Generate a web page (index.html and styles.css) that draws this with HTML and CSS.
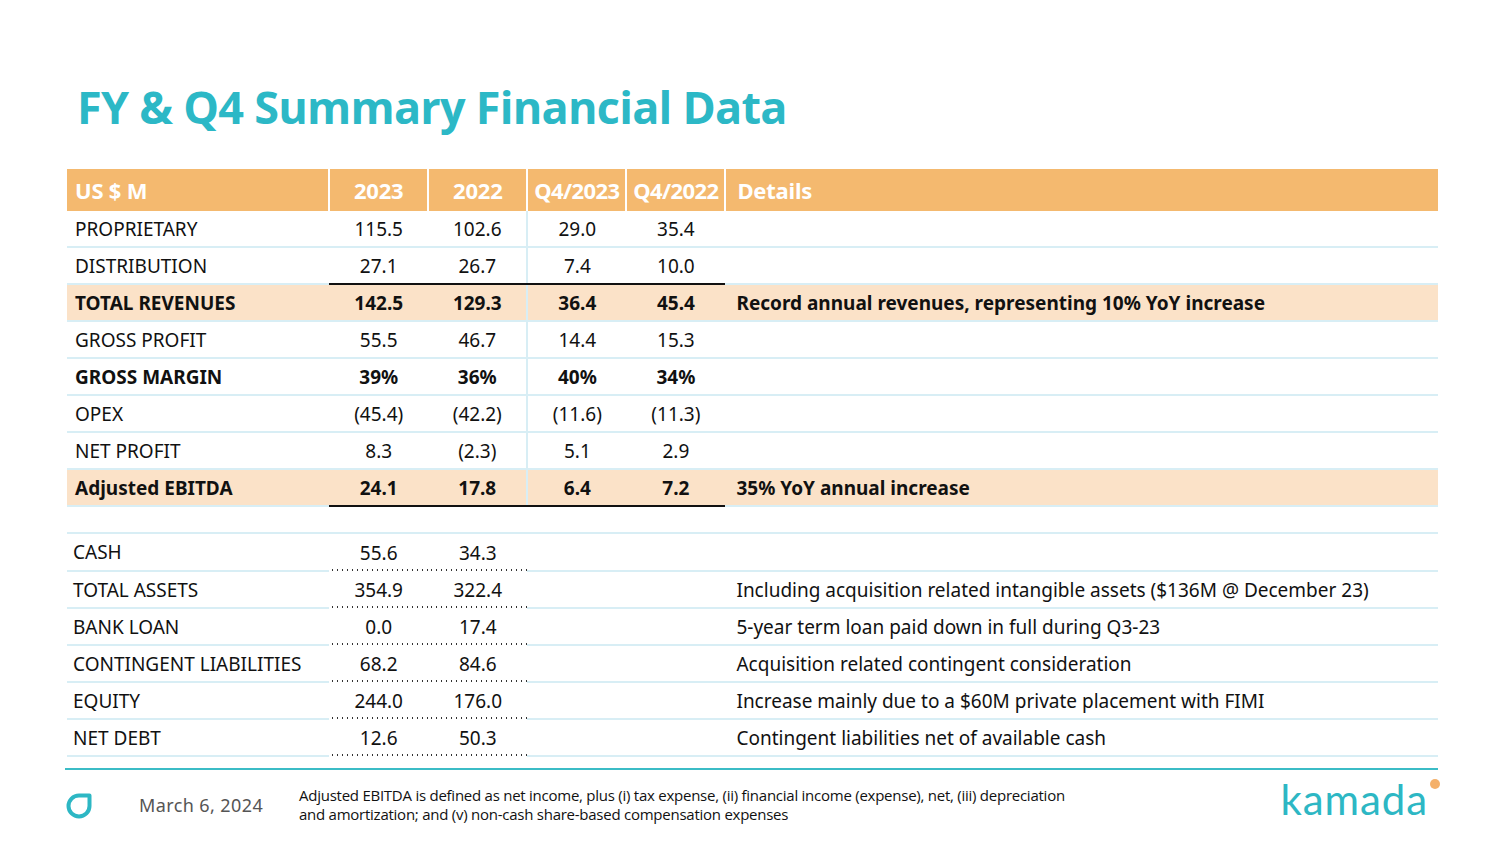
FILE: index.html
```html
<!DOCTYPE html>
<html lang="en">
<head>
<meta charset="utf-8">
<title>FY &amp; Q4 Summary Financial Data</title>
<link rel="stylesheet" href="styles.css">
</head>
<body>
<div class="slide">
  <h1 class="title">FY &amp; Q4 Summary Financial Data</h1>
  <table class="fin">
    <colgroup>
      <col class="c-label"><col class="c-num"><col class="c-num"><col class="c-num"><col class="c-num"><col class="c-det">
    </colgroup>
    <thead>
      <tr>
        <th class="lab">US $ M</th><th>2023</th><th>2022</th><th class="q">Q4/2023</th><th class="q">Q4/2022</th><th class="lab det">Details</th>
      </tr>
    </thead>
    <tbody>
      <tr><td class="lab">PROPRIETARY</td><td>115.5</td><td>102.6</td><td class="vl">29.0</td><td>35.4</td><td class="det"></td></tr>
      <tr class="ul"><td class="lab">DISTRIBUTION</td><td>27.1</td><td>26.7</td><td class="vl">7.4</td><td>10.0</td><td class="det"></td></tr>
      <tr class="hl"><td class="lab">TOTAL REVENUES</td><td>142.5</td><td>129.3</td><td class="vl">36.4</td><td>45.4</td><td class="det">Record annual revenues, representing 10% YoY increase</td></tr>
      <tr><td class="lab">GROSS PROFIT</td><td>55.5</td><td>46.7</td><td class="vl">14.4</td><td>15.3</td><td class="det"></td></tr>
      <tr class="bold"><td class="lab">GROSS MARGIN</td><td>39%</td><td>36%</td><td class="vl">40%</td><td>34%</td><td class="det"></td></tr>
      <tr><td class="lab">OPEX</td><td>(45.4)</td><td>(42.2)</td><td class="vl">(11.6)</td><td>(11.3)</td><td class="det"></td></tr>
      <tr><td class="lab">NET PROFIT</td><td>8.3</td><td>(2.3)</td><td class="vl">5.1</td><td>2.9</td><td class="det"></td></tr>
      <tr class="hl ul"><td class="lab">Adjusted EBITDA</td><td>24.1</td><td>17.8</td><td class="vl">6.4</td><td>7.2</td><td class="det">35% YoY annual increase</td></tr>
      <tr class="gap"><td colspan="6"></td></tr>
      <tr class="bs"><td class="lab">CASH</td><td class="dot">55.6</td><td class="dot">34.3</td><td></td><td></td><td class="det"></td></tr>
      <tr class="bs"><td class="lab">TOTAL ASSETS</td><td class="dot">354.9</td><td class="dot">322.4</td><td></td><td></td><td class="det">Including acquisition related intangible assets ($136M @ December 23)</td></tr>
      <tr class="bs"><td class="lab">BANK LOAN</td><td class="dot">0.0</td><td class="dot">17.4</td><td></td><td></td><td class="det">5-year term loan paid down in full during Q3-23</td></tr>
      <tr class="bs"><td class="lab">CONTINGENT LIABILITIES</td><td class="dot">68.2</td><td class="dot">84.6</td><td></td><td></td><td class="det">Acquisition related contingent consideration</td></tr>
      <tr class="bs"><td class="lab">EQUITY</td><td class="dot">244.0</td><td class="dot">176.0</td><td></td><td></td><td class="det">Increase mainly due to a $60M private placement with FIMI</td></tr>
      <tr class="bs"><td class="lab">NET DEBT</td><td class="dot">12.6</td><td class="dot">50.3</td><td></td><td></td><td class="det">Contingent liabilities net of available cash</td></tr>
    </tbody>
  </table>
  <footer class="foot">
    <svg class="mark" width="26" height="26" viewBox="0 0 26 26" aria-hidden="true">
      <path d="M23.5 2.5 H13 A10.5 10.5 0 1 0 23.5 13 Z" fill="none" stroke="#2db7c4" stroke-width="4" stroke-linejoin="round"/>
    </svg>
    <span class="date">March 6, 2024</span>
    <p class="note">Adjusted EBITDA is defined as net income, plus (i) tax expense, (ii) financial income (expense), net, (iii) depreciation<br>and amortization; and (v) non-cash share-based compensation expenses</p>
    <div class="brand"><span class="brand-text">kamada</span><span class="brand-dot"></span></div>
  </footer>
</div>
</body>
</html>
```

FILE: styles.css
```css
html, body {
  margin: 0;
  padding: 0;
  background: #ffffff;
}
body {
  font-family: "Noto Sans", "Open Sans", sans-serif;
  color: #111;
}
.slide {
  width: 1500px;
  height: 843px;
  box-sizing: border-box;
  padding: 77px 62px 0 67px;
  display: flex;
  flex-direction: column;
  overflow: hidden;
}
.title {
  margin: 0 0 0 10px;
  height: 92px;
  font-family: "Open Sans", sans-serif;
  font-weight: 700;
  font-size: 45px;
  line-height: 60px;
  letter-spacing: -0.75px;
  color: #2cb8c6;
  white-space: nowrap;
}
.fin {
  width: 1371px;
  border-collapse: collapse;
  table-layout: fixed;
  font-size: 19px;
}
.c-label { width: 262px; }
.c-num { width: 99px; }
.c-det { width: 712px; }
.fin th {
  background: #f4b96f;
  color: #fff;
  font-weight: 700;
  font-size: 22px;
  height: 42px;
  padding: 0;
  text-align: center;
  border-left: 2px solid #fff;
  letter-spacing: -0.2px;
  white-space: nowrap;
}
.fin th:first-child { border-left: none; }
.fin th.q { letter-spacing: -0.6px; }
.fin th.lab { text-align: left; padding-left: 8px; }
.fin th.det { padding-left: 11px; }
.fin td {
  height: 35px;
  padding: 0;
  text-align: center;
  border-bottom: 2px solid #d8eef5;
  color: #111;
  white-space: nowrap;
}
.fin td.lab { text-align: left; padding-left: 8px; }
.fin td.det { text-align: left; padding-left: 11px; }
.fin td.vl { border-left: 2px solid #d8eef5; }
.fin tr.hl td { background: #fbe2c8; font-weight: 700; }
.fin tr.bold td { font-weight: 700; }
.fin tr.ul td:nth-child(n+2):nth-child(-n+5) { border-bottom: 2px solid #111; }
.fin tr.gap td { height: 25px; }
.fin tr.bs td.lab { padding-left: 6px; }
.fin tr.bs td.dot {
  border-bottom: none;
  background-image: radial-gradient(circle, #333 0.9px, transparent 1.1px);
  background-size: 5px 2px;
  background-repeat: repeat-x;
  background-position: 1px 100%;
  height: 37px;
}
.foot {
  margin-top: 11px;
  width: 1373px;
  margin-left: -2px;
  border-top: 2px solid #3bbcc6;
  display: flex;
  align-items: center;
  height: 72px;
  box-sizing: border-box;
  padding-top: 0;
}
.mark {
  margin-left: 1px;
  flex: none;
  margin-top: 2px;
}
.date {
  margin-left: 47px;
  font-family: "Noto Sans", sans-serif;
  font-size: 18px;
  color: #555;
  letter-spacing: 0.4px;
  width: 160px;
  flex: none;
}
.note {
  margin: 0;
  font-family: "Open Sans", sans-serif;
  font-size: 15px;
  line-height: 19px;
  letter-spacing: -0.25px;
  color: #111;
  flex: 1;
}
.brand {
  position: relative;
  flex: none;
  margin-right: 8px;
  padding-right: 2px;
  margin-top: -11px;
}
.brand-text {
  font-family: "Lato", sans-serif;
  font-size: 42px;
  font-weight: 400;
  color: #2db7c4;
  letter-spacing: 0.9px;
  line-height: 40px;
}
.brand-dot {
  position: absolute;
  right: -10px;
  top: 0px;
  width: 10px;
  height: 10px;
  border-radius: 50%;
  background: #f4b06a;
}
```
